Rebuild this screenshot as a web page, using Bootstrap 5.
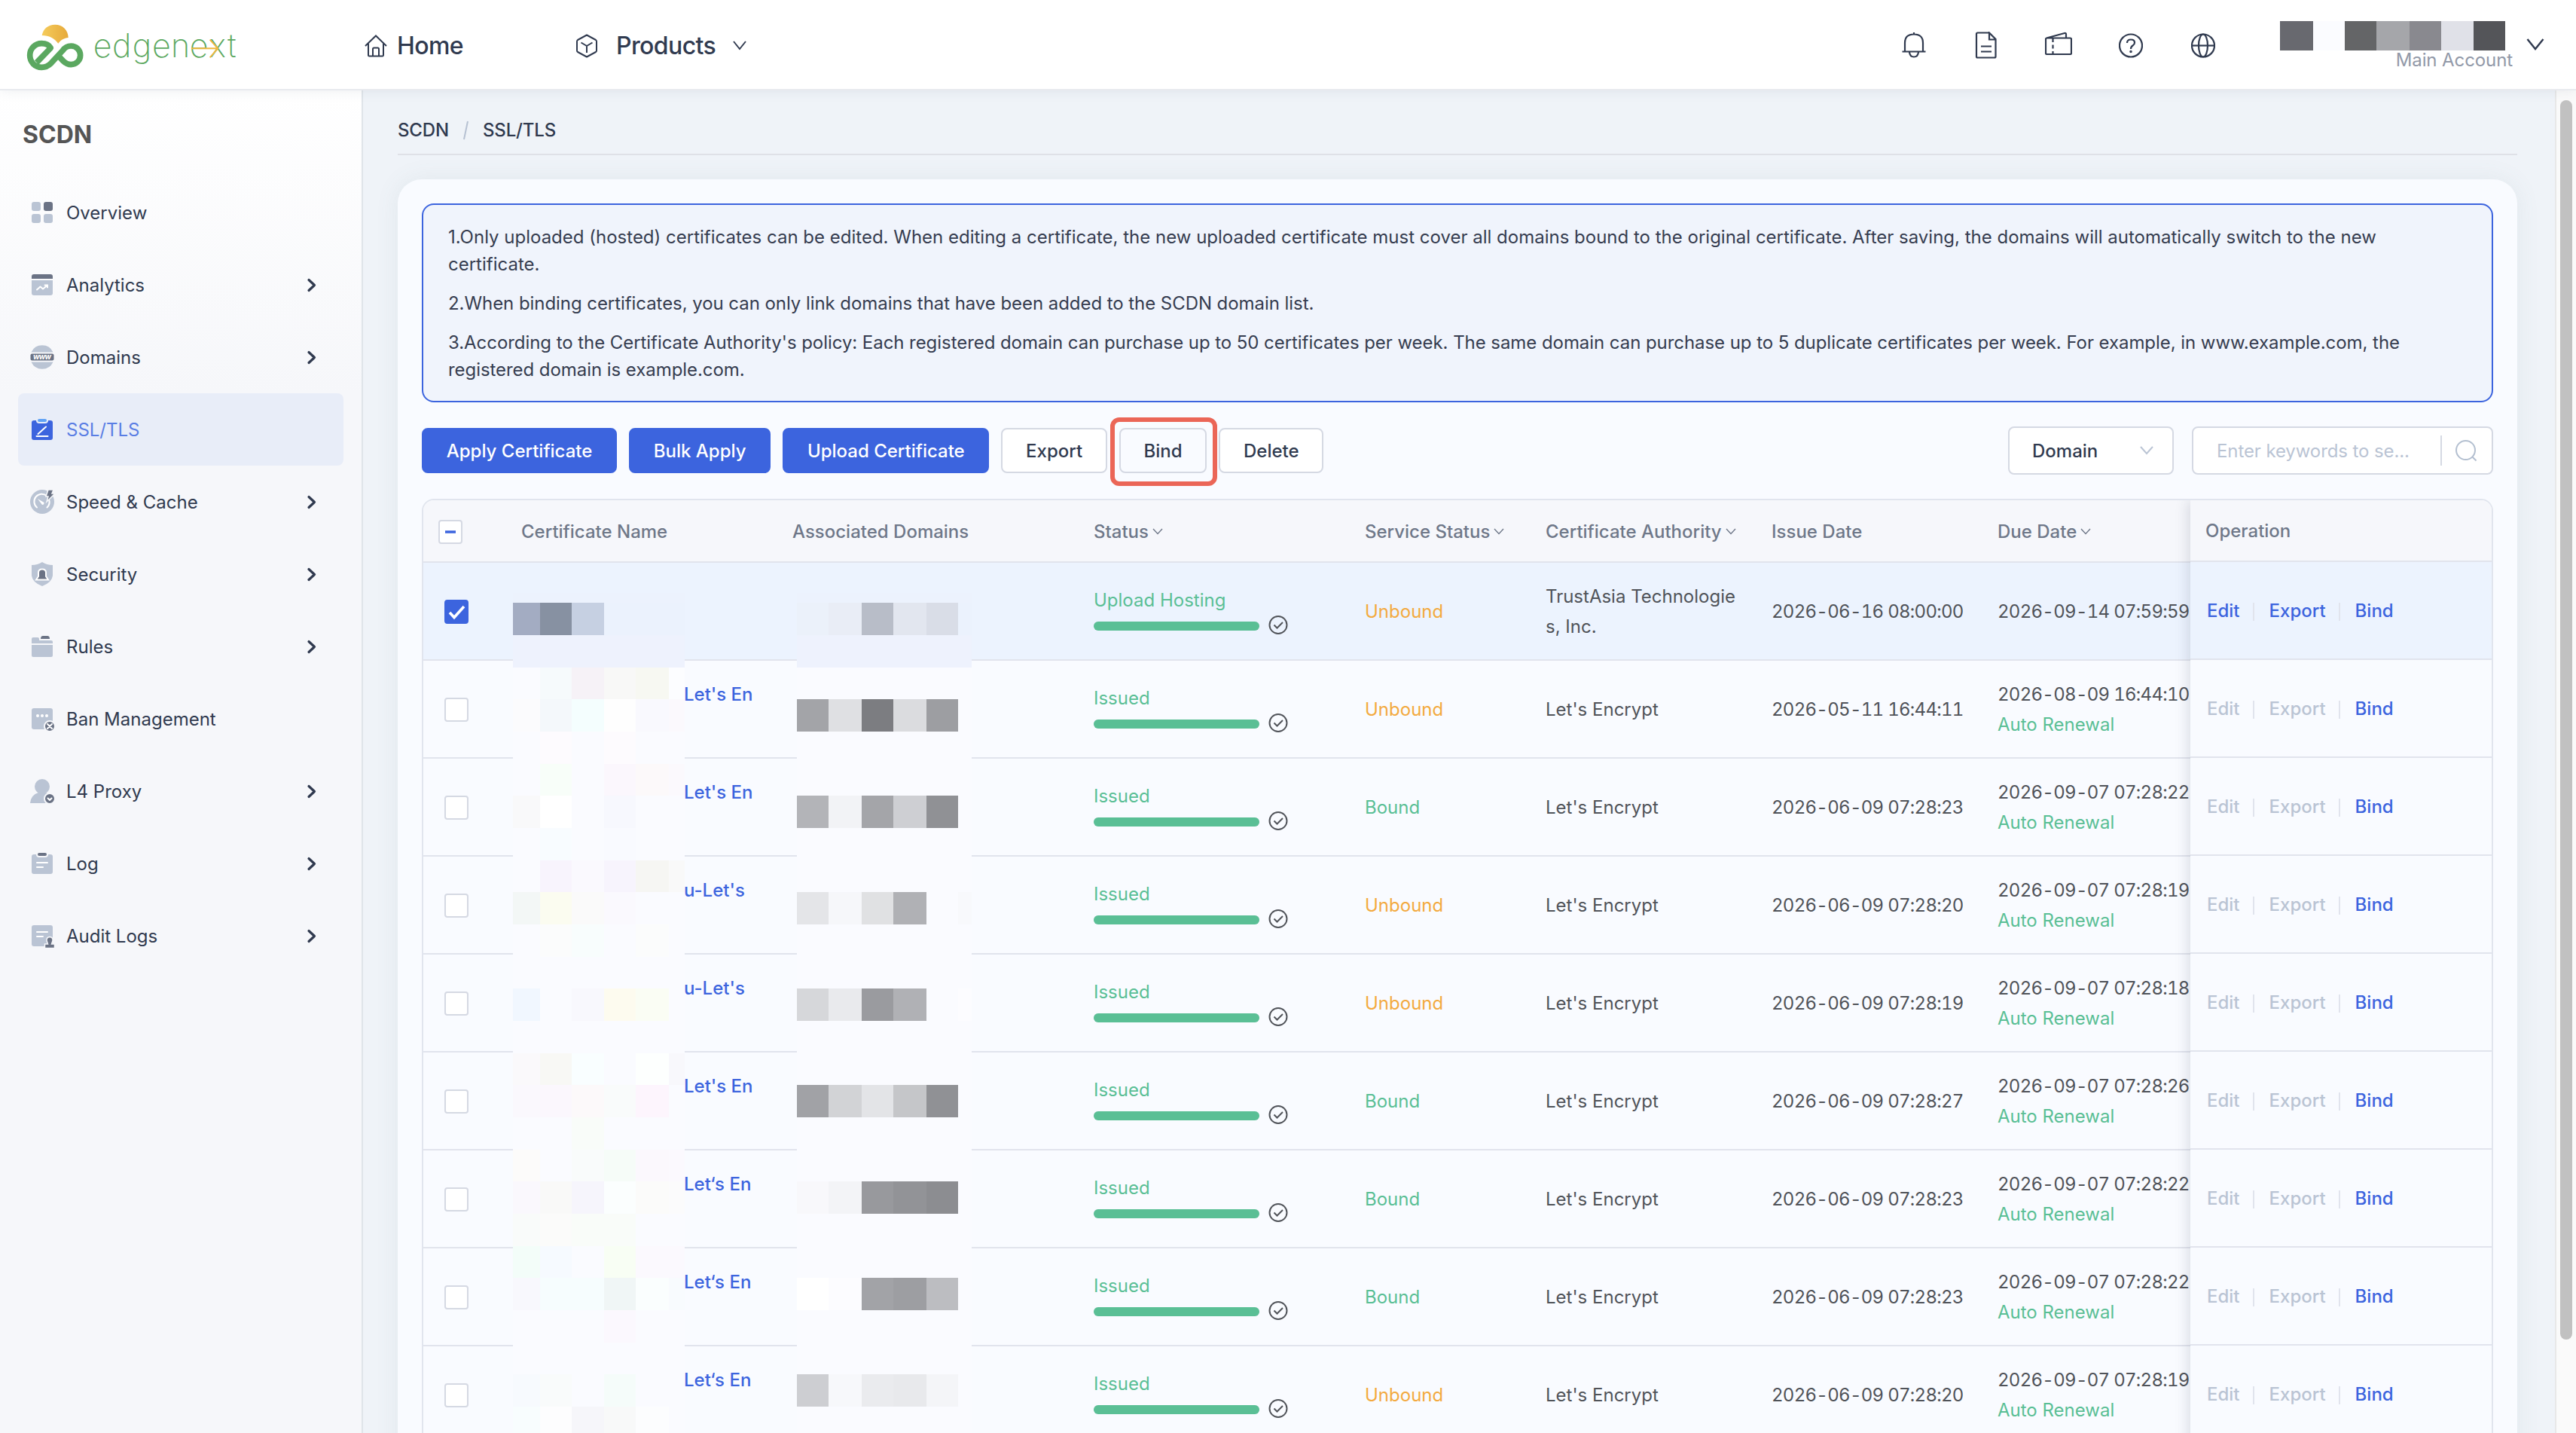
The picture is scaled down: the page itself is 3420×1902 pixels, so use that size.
<!DOCTYPE html>
<html lang="en">
<head>
  <meta charset="UTF-8" />
  <meta name="viewport" content="width=device-width, initial-scale=1" />
  <title>SCDN - SSL/TLS</title>

  <!-- Bootstrap 5 CDN -->
  <link href="https://cdn.jsdelivr.net/npm/bootstrap@5.3.3/dist/css/bootstrap.min.css" rel="stylesheet" />

  <style>
    body {
      height: 1902px;
      background-color: #eff3f8;
      font-family: Inter, 'Liberation Sans', sans-serif;
      font-size: 24px;
      line-height: 36px;
      color: #303a4f;
    }

    svg {
      display: block;
      flex-shrink: 0;
    }

    .stroke-icon {
      fill: none;
      stroke: #303a4f;
      stroke-width: 2;
    }

    /* top bar */
    .topbar {
      height: 120px;
      padding: 0 42px 0 20px;
      background: #fff;
      border-bottom: 2px solid #e9ebef;
      box-shadow: 0 0 16px rgba(60, 80, 110, 0.1);
      z-index: 5;
    }

    .brand-logo {
      margin-top: 4px;
    }

    .brand-logo text {
      font-size: 129px;
      font-weight: 200;
      fill: #5ba860;
    }

    .top-link {
      padding-top: 3px;
      font-size: 32px;
      font-weight: 500;
      color: #303a4f;
      letter-spacing: -0.6px;
    }

    .home-link {
      margin-left: 144px;
      gap: 13px;
    }

    .products-link {
      margin-left: 149px;
    }

    .products-link .caret {
      margin-left: 23px;
    }

    .tool-icons {
      gap: 64px;
      margin-right: 86px;
      padding-top: 2px;
    }

    .tool-icons .wide {
      margin: 0 -2px;
    }

    .account {
      width: 311px;
      padding-top: 3px;
      line-height: 26px;
      color: #9299a8;
      letter-spacing: -0.1px;
    }

    .account div {
      padding-right: 2px;
    }

    /* sidebar */
    .sidebar {
      width: 482px;
      padding: 0 24px;
      border-right: 2px solid #dfe4e9;
      background: linear-gradient(#fff, #f6f7fa 400px);
    }

    .sidebar-title {
      height: 114px;
      padding: 41px 0 0 6px;
      font-size: 32px;
      font-weight: 700;
      color: #555;
    }

    .menu-link {
      height: 96px;
      padding: 0 35px 0 16px;
      gap: 16px;
      border-radius: 8px;
      color: #303a4f;
    }

    .menu-link span {
      padding-top: 2px;
    }

    .menu-link.active {
      background: #e8edf8;
      color: #5a7ee4;
    }

    .menu-link .lt { fill: #bac4d4; }
    .menu-link .dk { fill: #6b7385; }
    .menu-link .wl { fill: none; stroke: #fff; stroke-width: 2; stroke-linecap: round; stroke-linejoin: round; }

    /* content */
    .content {
      padding: 0 50px 0 46px;
      min-width: 0;
    }

    .crumbs {
      height: 86px;
      padding-top: 22px;
      border-bottom: 2px solid #dfe1e7;
      font-weight: 500;
      letter-spacing: -0.15px;
    }

    .crumbs svg {
      margin: 0 14px 0 15px;
    }

    .panel {
      margin-top: 32px;
      height: 1720px;
      padding: 32px;
      background: #f9fbff;
      border-radius: 32px;
      box-shadow: 0 0 32px rgba(90, 120, 120, 0.09);
    }

    .tips {
      height: 264px;
      padding: 25px 31px 0 33px;
      background: #f0f4fc;
      border: 2px solid #3c64de;
      border-radius: 16px;
      color: #363d50;
    }

    .tips p {
      margin-bottom: 16px;
    }

    .tips p + p {
      letter-spacing: -0.06px;
    }

    .toolbar {
      height: 64px;
      margin: 32px 0;
      gap: 16px;
    }

    .toolbar .btn {
      height: 60px;
      padding: 1px 30.7px 0;
      border: 2px solid #d5d9e3;
      border-radius: 8px;
      background: #fff;
      color: #303a4f;
      font-size: 24px;
      font-weight: 500;
      line-height: 55px;
    }

    .toolbar .btn-blue {
      background: #3c64de;
      border-color: #3c64de;
      color: #fff;
    }

    .toolbar .btn-plain {
      background: #f9fbff;
    }

    .callout {
      position: absolute;
      inset: -14px -14px -17px -12px;
      border: 6px solid #eb6657;
      border-radius: 12px;
    }

    .field {
      height: 64px;
      border: 2px solid #d5d9e3;
      border-radius: 8px;
      background: #fff;
    }

    .field span {
      padding-top: 1px;
    }

    .select-field {
      width: 220px;
      padding: 0 25px 0 30px;
      font-weight: 500;
    }

    .search-field {
      width: 400px;
      margin-left: 8px;
      padding: 0 19px 0 31px;
      color: #bac4d4;
      letter-spacing: -0.1px;
    }

    .search-field .vline {
      width: 2px;
      height: 40px;
      margin-right: 17px;
      background: #d5d9e3;
    }

    /* certificate table */
    .cert-box {
      height: 1400px;
      border: 2px solid #e1e5ee;
      border-radius: 16px;
    }

    .cert-scroll {
      width: 2346px;
    }

    .cert-table {
      width: 2369px;
      table-layout: fixed;
      border-collapse: separate;
      border-spacing: 0;
      line-height: 40px;
      color: #505359;
    }

    .cert-table th,
    .cert-table td {
      height: 130px;
      padding: 2px 0 0 20px;
      border-bottom: 2px solid #e1e4ed;
      vertical-align: middle;
      white-space: nowrap;
    }

    .cert-table th {
      height: 83px;
      background: #f6f7fb;
      color: #6f7889;
      font-weight: 500;
    }

    .cert-table .picked td {
      background: #ecf3fe;
    }

    .cert-name {
      height: 80px;
      padding-left: 216px;
      color: #3c64de;
      font-weight: 500;
    }

    .tick {
      width: 32px;
      height: 32px;
      margin-left: 8px;
      border: 2px solid #d5d9e3;
      border-radius: 4px;
      background: #fff;
    }

    th .tick {
      margin-left: 0;
    }

    .tick.on {
      background: #3c64de;
      border-color: #3c64de;
    }

    .bar-line {
      height: 30px;
      margin: -1px 0 1px;
      gap: 12px;
    }

    .bar-line .progress {
      width: 220px;
      height: 12px;
      border-radius: 6px;
      background: #e1e5ee;
    }

    .bar-line .progress-bar {
      background: #5abf95;
    }

    .ok { color: #5abf95; }
    .warn { color: #f3aa3f; }

    .date {
      font-variant-numeric: tabular-nums;
      letter-spacing: -0.72px;
    }

    .cert-ops {
      width: 400px;
      background: #f9fbff;
      box-shadow: -4px 0 16px rgba(40, 50, 80, 0.14);
    }

    .cert-ops .cert-table {
      width: 400px;
    }

    .cert-ops .cert-table th {
      height: 82px;
    }

    .cert-ops .cert-table td {
      padding-left: 22px;
      font-weight: 500;
      color: #3c64de;
    }

    .cert-ops .off {
      color: #bac4d4;
    }

    .cert-ops .vline {
      width: 2px;
      height: 24px;
      margin: 2px 20px 0 17px;
      background: #e1e4ed;
    }

    .mosaic {
      position: absolute;
      left: 0;
      top: 0;
    }

    /* page scrollbar */
    .page-scroll {
      width: 28px;
      padding: 13px 0 0 5px;
      background: #fafafa;
      border-left: 2px solid #e8e8e8;
    }

    .page-thumb {
      width: 16px;
      height: 1645px;
      border-radius: 8px;
      background: #c1c1c1;
    }
  </style>
</head>
<body class="d-flex flex-column overflow-hidden">

  <header class="topbar d-flex align-items-center flex-shrink-0 position-relative">
    <svg class="brand-logo" width="320" height="90" viewBox="0 0 960 270">
      <defs>
        <linearGradient id="sun"><stop offset="0" stop-color="#f5cc5c" /><stop offset="1" stop-color="#e6a93a" /></linearGradient>
      </defs>
      <path fill="url(#sun)" d="M107 93 C112 66 132 50 159 50 C190 50 212 72 212 102 C195 104 183 111 172 125 C156 104 136 93 107 93Z" />
      <path fill="none" stroke="#5ba860" stroke-width="23" stroke-linejoin="round" d="M86 201 L142 143 C134 129 120 125 106 125 C79 125 59 146 59 172 C59 199 79 220 106 220 C122 220 134 213 144 203 L190 153 C198 141 210 135 223 135 C243 135 260 151 260 172 C260 193 243 209 223 209 C210 209 201 204 192 195 L176 178" />
      <text y="180" x="311 387 467 546 621 695 773 846">edgenext</text>
      <path fill="none" stroke="#f0b840" stroke-width="6" d="M702 145 H806 M776 110 L808 145 L776 181" />
    </svg>
    <a class="top-link home-link d-flex align-items-center text-decoration-none" href="#">
      <svg class="stroke-icon" width="30" height="30" viewBox="0 0 30 30"><path d="M1 15 L15 1.5 L29 15 M5 12 V27 Q5 28.5 6.500 28.500 H23.500 Q25 28.500 25 27 V12 M11 28 V19 Q11 17.500 12.500 17.500 H17.500 Q19 17.500 19 19 V28" /></svg>
      <span>Home</span>
    </a>
    <a class="top-link products-link d-flex align-items-center text-decoration-none" href="#">
      <svg class="stroke-icon me-4" width="30" height="32" viewBox="0 0 30 32"><path d="M15 1.500 L27 8 Q28 8.600 28 10 V22 Q28 23.400 27 24 L15 30.500 L3 24 Q2 23.400 2 22 V10 Q2 8.600 3 8Z M7.500 11.500 L15 16 L22.500 11.500 M15 16 V25" stroke-linejoin="round" /></svg>
      <span>Products</span>
      <svg class="stroke-icon caret" width="18" height="14" viewBox="0 0 18 14"><path d="M1 1 L9 11 L17 1" /></svg>
    </a>

    <div class="tool-icons d-flex ms-auto">
      <svg class="stroke-icon" width="32" height="36" viewBox="0 0 32 36"><path d="M16 1 V4 M4 26 V15 Q4 3.500 16 3.500 Q28 3.500 28 15 V26 M0.500 26.500 H31.500 M10 27 Q10.500 33.500 16 33.500 Q21.500 33.500 22 27" stroke-width="2.200" /></svg>
      <svg class="stroke-icon" width="32" height="36" viewBox="0 0 32 36"><path d="M20 1.500 H4.500 Q3 1.500 3 3 V33 Q3 34.500 4.500 34.500 H27 Q28.500 34.500 28.500 33 V10 L20 1.500 V10.500 H28.500 M9 19.500 H23 M9 26.500 H23" stroke-width="2.200" /></svg>
      <svg class="stroke-icon wide" width="36" height="36" viewBox="0 0 36 36"><path d="M1 10 Q1 8.500 2.500 8.500 H33.500 Q35 8.500 35 10 V28.500 Q35 30 33.500 30 H2.500 Q1 30 1 28.500Z M2 8.500 L26 2 Q28 1.500 28 3.500 V8.500" stroke-width="2.200" /><path d="M10.500 9 V30" stroke-dasharray="5 3.500" stroke-width="2.200" /></svg>
      <svg class="stroke-icon" width="32" height="36" viewBox="0 0 32 36"><circle cx="16" cy="18.500" r="15" stroke-width="2.200" /><path d="M11 15 Q11 10.500 16 10.500 Q21 10.500 21 14.500 Q21 17 18.500 18.500 Q16 20 16 23" stroke-width="2.200" /><circle cx="16" cy="26.500" r="0.800" /></svg>
      <svg class="stroke-icon" width="32" height="36" viewBox="0 0 32 36"><g stroke-width="2.200"><circle cx="16" cy="18.500" r="15" /><ellipse cx="16" cy="18.500" rx="6" ry="15" /><path d="M1 18.500 H31" /></g></svg>
    </div>

    <div class="account text-end">
      <svg width="311" height="39" viewBox="0 0 311 39" shape-rendering="crispEdges">
        <rect width="44" height="39" fill="#68696f" />
        <rect x="44" width="42" height="39" fill="#fbfcff" />
        <rect x="86" width="42" height="39" fill="#646567" />
        <rect x="128" width="44" height="39" fill="#a5a6aa" />
        <rect x="172" width="42" height="39" fill="#89898f" />
        <rect x="214" width="43" height="39" fill="#e0e1e8" />
        <rect x="257" width="42" height="39" fill="#545559" />
      </svg>
      <div>Main Account</div>
    </div>
    <svg class="stroke-icon ms-3" width="24" height="18" viewBox="0 0 24 18"><path d="M1.500 2 L12 15 L22.500 2" stroke-width="2.400" /></svg>
  </header>

  <div class="d-flex flex-grow-1 overflow-hidden">
    <aside class="sidebar flex-shrink-0">
      <div class="sidebar-title">SCDN</div>
      <nav class="d-flex flex-column" id="sideMenu"></nav>
    </aside>

    <main class="content flex-grow-1">
      <div class="crumbs d-flex align-items-center">
        <span>SCDN</span>
        <svg width="16" height="26" viewBox="0 0 16 26"><path d="M5 25 L10 1" stroke="#b6c1d2" stroke-width="2" /></svg>
        <span>SSL/TLS</span>
      </div>

      <section class="panel">
        <div class="tips">
          <p>1.Only uploaded (hosted) certificates can be edited. When editing a certificate, the new uploaded certificate must cover all domains bound to the original certificate. After saving, the domains will automatically switch to the new certificate.</p>
          <p>2.When binding certificates, you can only link domains that have been added to the SCDN domain list.</p>
          <p>3.According to the Certificate Authority's policy: Each registered domain can purchase up to 50 certificates per week. The same domain can purchase up to 5 duplicate certificates per week. For example, in www.example.com, the registered domain is example.com.</p>
        </div>

        <div class="toolbar d-flex align-items-center">
          <button class="btn btn-blue">Apply Certificate</button>
          <button class="btn btn-blue">Bulk Apply</button>
          <button class="btn btn-blue">Upload Certificate</button>
          <button class="btn">Export</button>
          <div class="position-relative">
            <button class="btn btn-plain">Bind</button>
            <div class="callout"></div>
          </div>
          <button class="btn">Delete</button>

          <div class="field select-field d-flex align-items-center justify-content-between ms-auto">
            <span>Domain</span>
            <svg width="18" height="12" viewBox="0 0 18 12"><path d="M1 1 L9 10 L17 1" fill="none" stroke="#bac4d4" stroke-width="2" /></svg>
          </div>
          <div class="field search-field d-flex align-items-center">
            <span class="me-auto">Enter keywords to se...</span>
            <span class="vline"></span>
            <svg width="30" height="30" viewBox="0 0 30 30"><g fill="none" stroke="#b3bfd0" stroke-width="2"><circle cx="14.500" cy="14.500" r="12.500" /><path d="M23 23 L28.500 28.500" /></g></svg>
          </div>
        </div>

        <div class="cert-box d-flex overflow-hidden position-relative">
          <div class="cert-scroll overflow-hidden flex-shrink-0">
            <table class="cert-table">
              <colgroup>
                <col width="110" /><col width="360" /><col width="400" /><col width="360" />
                <col width="240" /><col width="300" /><col width="300" /><col width="299" />
              </colgroup>
              <thead>
                <tr>
                  <th><div class="tick"><svg width="28" height="28" viewBox="0 0 28 28"><path d="M7 14 H21" stroke="#3c64de" stroke-width="3.500" /></svg></div></th>
                  <th>Certificate Name</th>
                  <th>Associated Domains</th>
                  <th><div class="d-flex align-items-center sortable">Status</div></th>
                  <th><div class="d-flex align-items-center sortable">Service Status</div></th>
                  <th><div class="d-flex align-items-center sortable">Certificate Authority</div></th>
                  <th>Issue Date</th>
                  <th><div class="d-flex align-items-center sortable">Due Date</div></th>
                </tr>
              </thead>
              <tbody id="certRows"></tbody>
            </table>
          </div>
          <svg class="mosaic" id="mosaic" width="740" height="1240" viewBox="0 0 740 1240" shape-rendering="crispEdges"></svg>
          <div class="cert-ops flex-shrink-0 position-relative">
            <table class="cert-table">
              <thead><tr><th>Operation</th></tr></thead>
              <tbody id="opRows"></tbody>
            </table>
          </div>
        </div>
      </section>
    </main>

    <div class="page-scroll flex-shrink-0"><div class="page-thumb"></div></div>
  </div>

  <script>
    const menu = [
      { label: 'Overview', icon: '<rect class="lt" x="2" y="2" width="12" height="12" rx="3"/><rect class="dk" x="18" y="2" width="12" height="12" rx="3"/><rect class="lt" x="2" y="18" width="12" height="12" rx="3"/><rect class="lt" x="18" y="18" width="12" height="12" rx="3"/>' },
      { label: 'Analytics', sub: true, icon: '<path class="dk" d="M2 8V5Q2 2 5 2H27Q30 2 30 5V8Z"/><path class="lt" d="M2 10H30V27Q30 30 27 30H5Q2 30 2 27Z"/><path class="wl" d="M9 22.500L13.500 18.500L17 21.500L23 16.500M19.500 16.500H23V19.500"/>' },
      { label: 'Domains', sub: true, icon: '<path class="lt" d="M1.500 9.500A16 16 0 0 1 30.500 9.500ZM1.500 22.500A16 16 0 0 0 30.500 22.500Z"/><rect class="dk" x="0.500" y="11.500" width="31" height="9" rx="2"/><text x="16" y="19" text-anchor="middle" font-size="10" font-weight="700" font-style="italic" fill="#fff" textLength="24">www</text>' },
      { label: 'SSL/TLS', active: true, icon: '<path fill="#3c64de" d="M5 4H8Q8 8 12 8H20Q24 8 24 4H27Q30 4 30 7V27Q30 30 27 30H5Q2 30 2 27V7Q2 4 5 4Z"/><rect fill="#62a3f5" x="10" y="2" width="12" height="4" rx="2"/><path class="wl" d="M10.500 22L21 12.500M8.500 25H23.500"/>' },
      { label: 'Speed & Cache', sub: true, icon: '<circle class="lt" cx="16" cy="16" r="16"/><path class="wl" d="M9 23.500A10 10 0 1 1 22 8M25 13A10 10 0 0 1 22.500 23.500"/><path fill="#fff" d="M10 12L18.500 17Q19 20 16 20Z"/><path class="dk" stroke="#f6f7fa" stroke-width="1.500" d="M24 0H31L29 5H33L22 16L24 9H21Z"/>' },
      { label: 'Security', sub: true, icon: '<path class="lt" d="M16 0Q22 4 30 4V18Q29 27 16 32Q3 27 2 18V4Q10 4 16 0Z"/><path class="dk" stroke="#fff" stroke-width="2" d="M8 23.500L11 19V14Q11 9.500 16 9.500Q21 9.500 21 14V19L24 23.500Z"/>' },
      { label: 'Rules', sub: true, icon: '<path class="lt" d="M2 12V6Q2 4 4 4H10Q12 4 12 6V8H28Q30 8 30 10V12ZM2 14H30V28Q30 30 28 30H4Q2 30 2 28Z"/><path class="dk" d="M14 6Q14 2 17 2H23Q26 2 26 6Z"/>' },
      { label: 'Ban Management', icon: '<rect class="lt" x="2" y="2" width="28" height="28" rx="3"/><g fill="#fff"><circle cx="10" cy="12" r="2"/><circle cx="16" cy="12" r="2"/><circle cx="22" cy="12" r="2"/></g><circle class="dk" cx="26" cy="26" r="7" stroke="#f6f7fa" stroke-width="2"/><path class="wl" d="M23 23L29 29M29 23L23 29"/>' },
      { label: 'L4 Proxy', sub: true, icon: '<circle class="lt" cx="16" cy="10" r="10"/><path class="lt" d="M0 32Q1 21 11 18H21Q29 20 31 32Z"/><circle class="dk" cx="26" cy="26" r="7" stroke="#f6f7fa" stroke-width="2"/><path class="wl" d="M23.500 25.500L26 28L28.500 25.500"/>' },
      { label: 'Log', sub: true, icon: '<path class="lt" d="M5 4H8Q8 8 12 8H20Q24 8 24 4H27Q30 4 30 7V27Q30 30 27 30H5Q2 30 2 27V7Q2 4 5 4Z"/><rect class="dk" x="10" y="2" width="12" height="4" rx="2"/><path class="wl" d="M9 15H23M9 21H17"/>' },
      { label: 'Audit Logs', sub: true, icon: '<rect class="lt" x="2" y="2" width="28" height="28" rx="3"/><path class="wl" d="M9 11H23M9 17H17"/><path class="dk" stroke="#f6f7fa" stroke-width="1.500" d="M26 17.500Q30.500 18 30 22.500L28.500 27H32.500V32.500H19.500V27H23.500L22 22.500Q21.500 18 26 17.500Z"/>' }
    ];

    document.getElementById('sideMenu').innerHTML = menu.map(m => `
      <a class="menu-link d-flex align-items-center text-decoration-none ${m.active ? 'active' : ''}" href="#">
        <svg width="32" height="32" viewBox="0 0 32 32" overflow="visible">${m.icon}</svg>
        <span>${m.label.replace('&', '&amp;')}</span>
        ${m.sub ? '<svg class="ms-auto" width="14" height="20" viewBox="0 0 14 20"><path d="M3 3.500 L10.500 10.500 L3 17.500" fill="none" stroke="#303a4f" stroke-width="3.200" stroke-linecap="round" stroke-linejoin="round"/></svg>' : ''}
      </a>`).join('');

    document.querySelectorAll('.sortable').forEach(el => {
      el.innerHTML += '<svg class="ms-1" width="15" height="9" viewBox="0 0 15 9"><path d="M2 1 L8 7.500 L14 1" fill="none" stroke="#6f7889" stroke-width="1.400"/></svg>';
    });

    const certs = [
      { name: '', status: 'Upload Hosting', bound: false, ca: 'TrustAsia Technologie<br>s, Inc.', issue: '2026-06-16 08:00:00', due: '2026-09-14 07:59:59', own: true },
      { name: "Let's En", bound: false, issue: '2026-05-11 16:44:11', due: '2026-08-09 16:44:10' },
      { name: "Let's En", bound: true, issue: '2026-06-09 07:28:23', due: '2026-09-07 07:28:22' },
      { name: "u-Let's", bound: false, issue: '2026-06-09 07:28:20', due: '2026-09-07 07:28:19' },
      { name: "u-Let's", bound: false, issue: '2026-06-09 07:28:19', due: '2026-09-07 07:28:18' },
      { name: "Let's En", bound: true, issue: '2026-06-09 07:28:27', due: '2026-09-07 07:28:26' },
      { name: 'Let‘s En', bound: true, issue: '2026-06-09 07:28:23', due: '2026-09-07 07:28:22' },
      { name: 'Let‘s En', bound: true, issue: '2026-06-09 07:28:23', due: '2026-09-07 07:28:22' },
      { name: 'Let‘s En', bound: false, issue: '2026-06-09 07:28:20', due: '2026-09-07 07:28:19' }
    ];

    document.getElementById('certRows').innerHTML = certs.map(c => `
      <tr class="${c.own ? 'picked' : ''}">
        <td><div class="tick ${c.own ? 'on' : ''}">${c.own ? '<svg width="28" height="28" viewBox="0 0 28 28"><path d="M5 15 L11 21.500 L24 7" fill="none" stroke="#fff" stroke-width="3.600"/></svg>' : ''}</div></td>
        <td><div class="cert-name">${c.name}</div></td>
        <td></td>
        <td>
          <div class="ok">${c.status || 'Issued'}</div>
          <div class="bar-line d-flex align-items-center">
            <div class="progress"><div class="progress-bar w-100"></div></div>
            <svg width="26" height="28" viewBox="0 0 26 28" fill="none" stroke="#505359" stroke-width="2"><circle cx="13" cy="12.500" r="11.500"/><path d="M7.500 12.500 L11.500 16.500 L19 9"/></svg>
          </div>
        </td>
        <td class="${c.bound ? 'ok' : 'warn'}">${c.bound ? 'Bound' : 'Unbound'}</td>
        <td>${c.ca || "Let's Encrypt"}</td>
        <td class="date">${c.issue}</td>
        <td><span class="date">${c.due}</span>${c.own ? '' : '<br><span class="ok">Auto Renewal</span>'}</td>
      </tr>`).join('');

    document.getElementById('opRows').innerHTML = certs.map(c => `
      <tr class="${c.own ? 'picked' : ''}">
        <td>
          <div class="d-flex align-items-center">
            <span class="${c.own ? '' : 'off'}">Edit</span><span class="vline"></span>
            <span class="${c.own ? '' : 'off'}">Export</span><span class="vline"></span>
            <span>Bind</span>
          </div>
        </td>
      </tr>`).join('');

    // pixelated areas over the name and domain columns, one entry per band of cells
    const plain = '#fafbff';
    const nameCells = {
      1: ['#a3acc2', '#8791a2', '#c6d0e2', '#ebf2fd', '#ebf2fd', '#ebf2fd'],
      2: ['#eef2fd', '#eef2fd', '#eef2fd', '#eef2fd', '#eef2fd', '#eef2fd'],
      3: [0, '#f6fafc', '#f6f2f7', '#f8f8f7', '#f7f8f2', '#fcfdff'],
      4: ['#fbfbfd', '#f4f8fb', '#f4fefe', '#fefefe', '#f9f9fe', '#fbf9fd'],
      5: [0, '#fdfbfe', 0, '#fdfbfe', 0, 0],
      6: [0, '#f8fef9', 0, '#fbf7fd', '#fcf9fa', '#fbf9fd'],
      7: ['#f9f9fa', '#ffffff', 0, '#f7f8fe', 0, 0],
      8: [0, '#f8fcff', 0, '#f9faff', 0, 0],
      9: [0, '#f8f4fd', '#faf9fe', '#f7f4fd', '#f6f6f3', '#f9f9f9'],
      10: ['#f3f7f6', '#fbfcf0', '#fafafa', '#faf9fe', 0, 0],
      11: [0, '#fbfcfc', '#f8fdfd', 0, '#fbfcfc', 0],
      13: ['#f1f7ff', 0, '#f8f8fd', '#fdfbef', '#fafdf4', 0],
      15: ['#faf9fb', '#f8f8f5', '#f9feff', 0, '#fdfffe', '#f8f8fc'],
      16: ['#faf8fd', '#fbf7fd', '#fcf9fa', '#f9fbfb', '#fdf5fd', 0],
      17: [0, 0, '#f9fcf9', 0, 0, 0],
      18: ['#fcfbfa', 0, '#f9fbfb', '#f6fcf8', '#fbf8fd', '#fbf9fe'],
      19: ['#faf8fd', '#f9f9f8', '#f6f5fc', '#fbfefe', '#fbfbfa', '#fbfbfc'],
      20: ['#f9fbfa', '#fbfbfa', '#f9fcf9', '#f9fcf9', 0, 0],
      21: ['#f3fdf9', '#f6faff', 0, '#f8fef4', '#fbf9fe', '#fbf9fe'],
      22: ['#f8f8fd', '#f6fdfe', '#f6fdfe', '#f0f6f6', '#fafefe', '#f8fbfe'],
      23: [0, 0, 0, '#fbf8fe', 0, 0],
      25: ['#f7fafe', '#f9fbfb', 0, '#f5fcfa', 0, 0],
      26: ['#f8fdfe', '#fdfdfe', '#f6f6fa', '#f8f9f9', '#fcfdfe', 0]
    };
    const domainCells = {
      1: ['#ebf1fa', '#e9edf6', '#b8bdc8', '#e2e6ef', '#d9dde7', '#ebf2fd'],
      2: ['#eef2fd', '#eef2fd', '#eef2fd', '#eef2fd', '#eef2fd', '#eef2fd'],
      4: ['#a3a4a8', '#dfe0e3', '#7c7d81', '#dbdcdf', '#9d9ea2', 0],
      7: ['#b3b4b8', '#f2f3f6', '#a4a5a9', '#cecfd3', '#909195', 0],
      10: ['#e4e5e8', '#f6f7fa', '#e0e1e3', '#b0b1b5', 0, '#f8f9fc'],
      13: ['#d6d7da', '#e9eaed', '#9a9b9f', '#b0b1b5', 0, '#fcfcff'],
      16: ['#a1a2a6', '#d2d3d6', '#e3e4e7', '#c5c6c9', '#909195', 0],
      19: ['#f8f8fb', '#f3f4f7', '#98999d', '#929397', '#8c8d91', 0],
      22: ['#ffffff', '#fcfcff', '#a2a3a7', '#9d9ea2', '#bcbdc1', 0],
      25: ['#cdced2', '#f7f8fb', '#eaebee', '#e8e9ec', '#f4f5f8', 0]
    };

    function drawMosaic(left, edges, cells) {
      const total = edges[edges.length - 1];
      let out = `<rect x="${left}" y="123" width="${total}" height="13" fill="#ecf2fd"/>`;
      for (let band = 1; band <= 26; band++) {
        const y = Math.round(93.5 + band * 42.67);
        const next = Math.round(93.5 + (band + 1) * 42.67);
        for (let i = 0; i < 6; i++) {
          const fill = (cells[band] && cells[band][i]) || plain;
          out += `<rect x="${left + edges[i]}" y="${y}" width="${edges[i + 1] - edges[i]}" height="${next - y}" fill="${fill}"/>`;
        }
      }
      return out;
    }

    document.getElementById('mosaic').innerHTML =
      drawMosaic(119, [0, 36, 78, 121, 163, 207, 228], nameCells) +
      drawMosaic(496, [0, 42, 86, 128, 172, 214, 232], domainCells);
  </script>

  <!-- Bootstrap JS -->
  <script src="https://cdn.jsdelivr.net/npm/bootstrap@5.3.3/dist/js/bootstrap.bundle.min.js"></script>
</body>
</html>
